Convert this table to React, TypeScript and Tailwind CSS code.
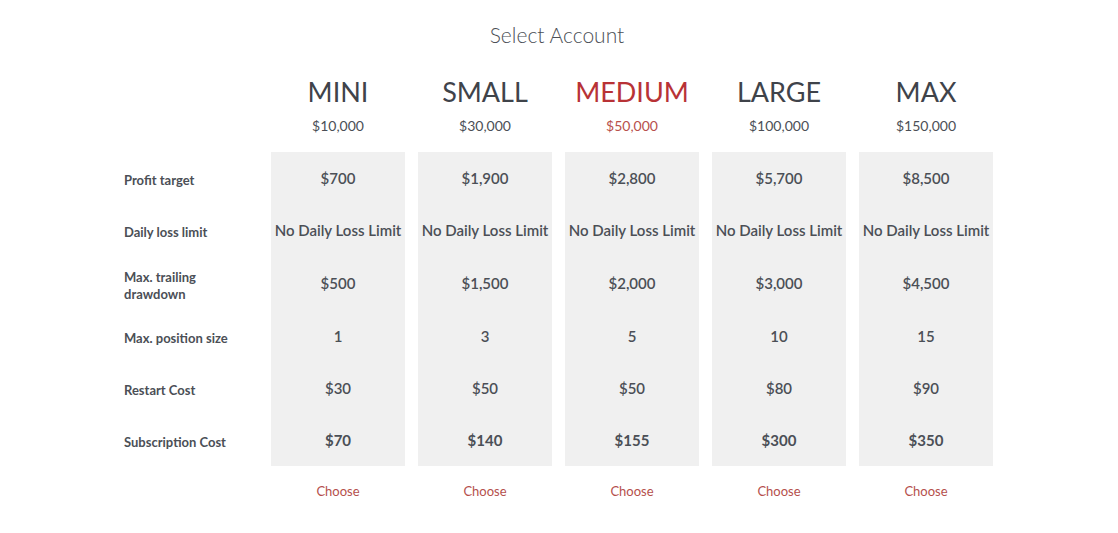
const plans = [
  { name: 'MINI', size: '$10,000', profit: '$700', drawdown: '$500', position: '1', restart: '$30', sub: '$70' },
  { name: 'SMALL', size: '$30,000', profit: '$1,900', drawdown: '$1,500', position: '3', restart: '$50', sub: '$140' },
  { name: 'MEDIUM', size: '$50,000', profit: '$2,800', drawdown: '$2,000', position: '5', restart: '$50', sub: '$155', active: true },
  { name: 'LARGE', size: '$100,000', profit: '$5,700', drawdown: '$3,000', position: '10', restart: '$80', sub: '$300' },
  { name: 'MAX', size: '$150,000', profit: '$8,500', drawdown: '$4,500', position: '15', restart: '$90', sub: '$350' },
]

const rows = [
  { label: 'Profit target', h: 'h-[52px]' },
  { label: 'Daily loss limit', h: 'h-[52px]' },
  { label: 'Max. trailing drawdown', h: 'h-[54px]' },
  { label: 'Max. position size', h: 'h-[52px]' },
  { label: 'Restart Cost', h: 'h-[52px]' },
  { label: 'Subscription Cost', h: 'h-[52px]' },
]

type Plan = (typeof plans)[number]

const cellValues = (p: Plan) => [p.profit, 'No Daily Loss Limit', p.drawdown, p.position, p.restart, p.sub]

export default function App() {
  return (
    <main className="min-h-screen bg-white text-[#4b4f56] font-['Lato',sans-serif]">
      <h1 className="pt-[21px] pr-[4px] text-center text-[21px] font-light leading-[28px] text-[#4b4f56]">Select Account</h1>

      <div className="mt-[25px] flex justify-center pr-[1px]">
        <div className="grid w-[869px] grid-cols-[134px_134px_134px_134px_134px_134px] gap-x-[13px]">
          {/* labels */}
          <div>
            <div className="h-[78px]" />
            {rows.map((r) => (
              <div key={r.label} className={`${r.h} flex items-center pt-[5px] pr-[20px] text-[13px] font-bold leading-[17px]`}>
                {r.label}
              </div>
            ))}
          </div>

          {plans.map((p) => (
            <div key={p.name} className="flex flex-col items-center">
              <div className={`h-[78px] w-full text-center ${p.active ? 'text-[#b83236]' : 'text-[#3f434a]'}`}>
                <div className="text-[27px] leading-[36px]">{p.name}</div>
                <div className={`mt-[6px] text-[14px] leading-[20px] ${p.active ? 'text-[#b8504c]' : 'text-[#4b4f56]'}`}>{p.size}</div>
              </div>
              <div className="w-full bg-[#f0f0f0]">
                {cellValues(p).map((v, i) => (
                  <div
                    key={i}
                    className={`${rows[i].h} flex items-center justify-center text-center text-[15px] leading-[20px] ${i === 5 ? 'font-bold' : 'font-semibold'}`}
                  >
                    {v}
                  </div>
                ))}
              </div>
              <a href="#" className="mt-[16px] text-[13px] leading-[18px] text-[#b5504c]">
                Choose
              </a>
            </div>
          ))}
        </div>
      </div>
    </main>
  )
}
